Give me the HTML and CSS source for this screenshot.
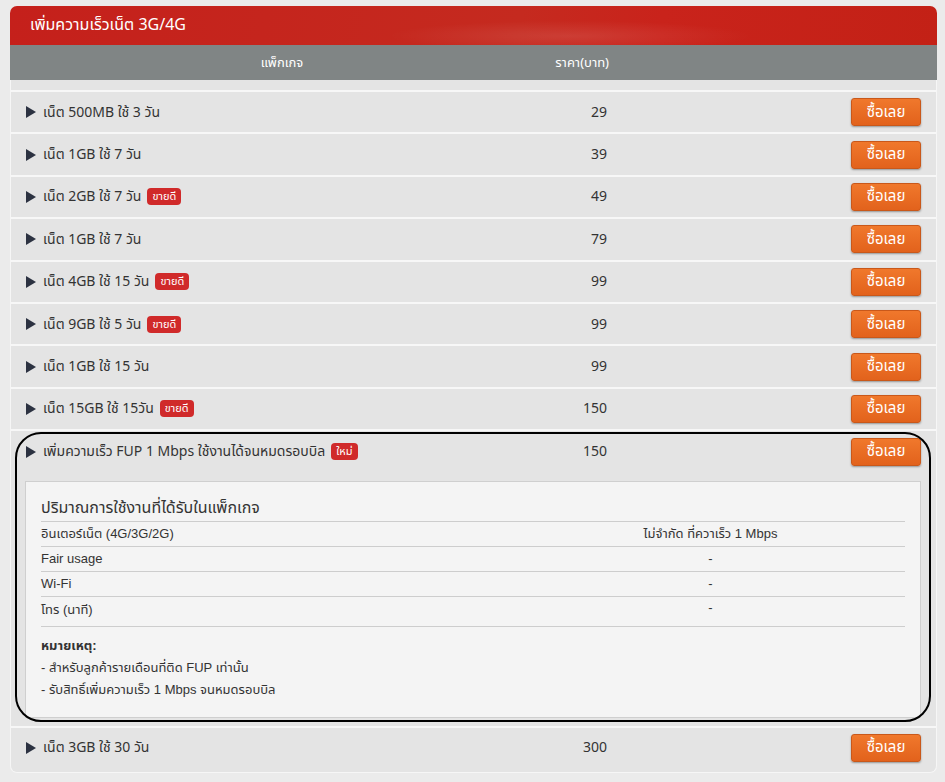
FILE: index.html
```html
<!DOCTYPE html>
<html lang="th">
<head>
<meta charset="utf-8">
<title>เพิ่มความเร็วเน็ต 3G/4G</title>
<link rel="stylesheet" href="styles.css">
</head>
<body>
<div class="panel">
  <div class="title">เพิ่มความเร็วเน็ต 3G/4G</div>
  <div class="thead">
    <div class="h-name">แพ็กเกจ</div>
    <div class="h-price">ราคา(บาท)</div>
    <div class="h-act"></div>
  </div>
  <div class="tbody">
    <div class="row">
      <div class="name"><span class="tri"></span>เน็ต 500MB ใช้ 3 วัน</div>
      <div class="price">29</div>
      <div class="act"><button class="buy">ซื้อเลย</button></div>
    </div>
    <div class="row">
      <div class="name"><span class="tri"></span>เน็ต 1GB ใช้ 7 วัน</div>
      <div class="price">39</div>
      <div class="act"><button class="buy">ซื้อเลย</button></div>
    </div>
    <div class="row">
      <div class="name"><span class="tri"></span>เน็ต 2GB ใช้ 7 วัน <span class="badge">ขายดี</span></div>
      <div class="price">49</div>
      <div class="act"><button class="buy">ซื้อเลย</button></div>
    </div>
    <div class="row">
      <div class="name"><span class="tri"></span>เน็ต 1GB ใช้ 7 วัน</div>
      <div class="price">79</div>
      <div class="act"><button class="buy">ซื้อเลย</button></div>
    </div>
    <div class="row">
      <div class="name"><span class="tri"></span>เน็ต 4GB ใช้ 15 วัน <span class="badge">ขายดี</span></div>
      <div class="price">99</div>
      <div class="act"><button class="buy">ซื้อเลย</button></div>
    </div>
    <div class="row">
      <div class="name"><span class="tri"></span>เน็ต 9GB ใช้ 5 วัน <span class="badge">ขายดี</span></div>
      <div class="price">99</div>
      <div class="act"><button class="buy">ซื้อเลย</button></div>
    </div>
    <div class="row">
      <div class="name"><span class="tri"></span>เน็ต 1GB ใช้ 15 วัน</div>
      <div class="price">99</div>
      <div class="act"><button class="buy">ซื้อเลย</button></div>
    </div>
    <div class="row">
      <div class="name"><span class="tri"></span>เน็ต 15GB ใช้ 15วัน <span class="badge">ขายดี</span></div>
      <div class="price">150</div>
      <div class="act"><button class="buy">ซื้อเลย</button></div>
    </div>
    <div class="item open">
      <div class="row inner">
        <div class="name"><span class="tri"></span>เพิ่มความเร็ว FUP 1 Mbps ใช้งานได้จนหมดรอบบิล <span class="badge">ใหม่</span></div>
        <div class="price">150</div>
        <div class="act"><button class="buy">ซื้อเลย</button></div>
      </div>
      <div class="detail">
        <div class="d-title">ปริมาณการใช้งานที่ได้รับในแพ็กเกจ</div>
        <div class="d-table">
          <div class="d-row"><div class="d-k">อินเตอร์เน็ต (4G/3G/2G)</div><div class="d-v">ไม่จำกัด ที่ควาเร็ว 1 Mbps</div></div>
          <div class="d-row"><div class="d-k">Fair usage</div><div class="d-v">-</div></div>
          <div class="d-row"><div class="d-k">Wi-Fi</div><div class="d-v">-</div></div>
          <div class="d-row last"><div class="d-k">โทร (นาที)</div><div class="d-v">-</div></div>
        </div>
        <div class="notes">
          <div class="n-head">หมายเหตุ:</div>
          <div class="n-line">- สำหรับลูกค้ารายเดือนที่ติด FUP เท่านั้น</div>
          <div class="n-line">- รับสิทธิ์เพิ่มความเร็ว 1 Mbps จนหมดรอบบิล</div>
        </div>
      </div>
      <div class="mark"></div>
    </div>
    <div class="row">
      <div class="name"><span class="tri"></span>เน็ต 3GB ใช้ 30 วัน</div>
      <div class="price">300</div>
      <div class="act"><button class="buy">ซื้อเลย</button></div>
    </div>
  </div>
</div>
</body>
</html>
```

FILE: styles.css
```css
* { box-sizing: border-box; }

html, body {
  margin: 0;
  padding: 0;
  background: #ebebeb;
}

body {
  font-family: Tahoma, "Noto Sans Thai", "Noto Sans", "DejaVu Sans", sans-serif;
  color: #333;
  font-size: 14px;
}

.panel {
  width: 927px;
  margin: 6px 0 0 10px;
  background: #e4e4e4;
  border: 1px solid #f6f6f6;
  border-top: none;
  border-radius: 7px 7px 7px 7px;
  padding-bottom: 4px;
}

.title {
  height: 39px;
  border-radius: 7px 7px 0 0;
  background:
    radial-gradient(ellipse 260px 22px at 560px 30px, rgba(255,255,255,0.10), rgba(255,255,255,0) 70%),
    linear-gradient(100deg, #c5201b 0%, #c52a1f 55%, #c9231b 70%, #c32116 100%);
  color: #fff;
  font-size: 16px;
  line-height: 39px;
  padding-left: 20px;
  margin: 0 -1px;
}

.thead {
  display: grid;
  grid-template-columns: 544px 60px 1fr;
  height: 35px;
  background: #808585;
  color: #fff;
  font-size: 13px;
  align-items: center;
  margin: 0 -1px;
}

.h-name { text-align: center; }
.h-price { text-align: right; padding-right: 5px; white-space: nowrap; }

.tbody {
  padding-top: 10px;
}

.row {
  display: grid;
  grid-template-columns: 543px 60px 1fr;
  align-items: center;
  height: 42.4px;
  border-top: 2px solid #f7f7f7;
}

.row.inner {
  border-top: none;
  height: 41.4px;
}

.item {
  position: relative;
  border-top: 2px solid #f7f7f7;
  padding-bottom: 8px;
}

.name {
  display: flex;
  align-items: center;
  padding-left: 15px;
  white-space: nowrap;
}

.tri {
  width: 0;
  height: 0;
  border-top: 6px solid transparent;
  border-bottom: 6px solid transparent;
  border-left: 10px solid #2c3241;
  margin-right: 7px;
}

.badge {
  display: inline-block;
  background: #d02a2a;
  color: #fff;
  font-size: 11px;
  line-height: 17px;
  height: 17px;
  padding: 0 5px;
  border-radius: 4px;
  margin-left: 6px;
}

.price {
  text-align: right;
  padding-right: 7px;
}

.act {
  display: flex;
  justify-content: flex-end;
  padding-right: 15px;
}

.buy {
  width: 70px;
  height: 28px;
  border: 1px solid #c9581a;
  border-radius: 3px;
  background: linear-gradient(#f0782c, #e2621c);
  color: #fff;
  font-family: inherit;
  font-size: 15px;
  padding: 0;
  box-shadow: 0 1px 2px rgba(0,0,0,0.35);
}

.detail {
  margin: 8px 15px 0 14px;
  height: 237px;
  background: #f4f4f4;
  border: 1px solid #cfcfcf;
  padding: 14px 15px 0 15px;
  font-family: "Liberation Sans", Tahoma, "Noto Sans Thai", sans-serif;
  font-size: 13px;
}

.d-title {
  font-size: 16px;
  line-height: 24px;
  padding-bottom: 1px;
  font-family: Tahoma, "Noto Sans Thai", "Noto Sans", sans-serif;
}

.d-table {
  border-top: 1px solid #cdcdcd;
}

.d-row {
  display: grid;
  grid-template-columns: 475px 1fr;
  height: 25px;
  align-items: center;
  border-bottom: 1px solid #cdcdcd;
}

.d-row.last {
  height: 30px;
  align-items: start;
  padding-top: 3px;
}

.d-v { text-align: center; }

.notes {
  padding-top: 8px;
}

.n-head {
  font-weight: bold;
  line-height: 22px;
}

.n-line {
  line-height: 22px;
}

.mark {
  position: absolute;
  top: 1px;
  left: 4px;
  right: 5px;
  bottom: 4px;
  border: 2px solid #000;
  border-radius: 26px;
  pointer-events: none;
}
```
